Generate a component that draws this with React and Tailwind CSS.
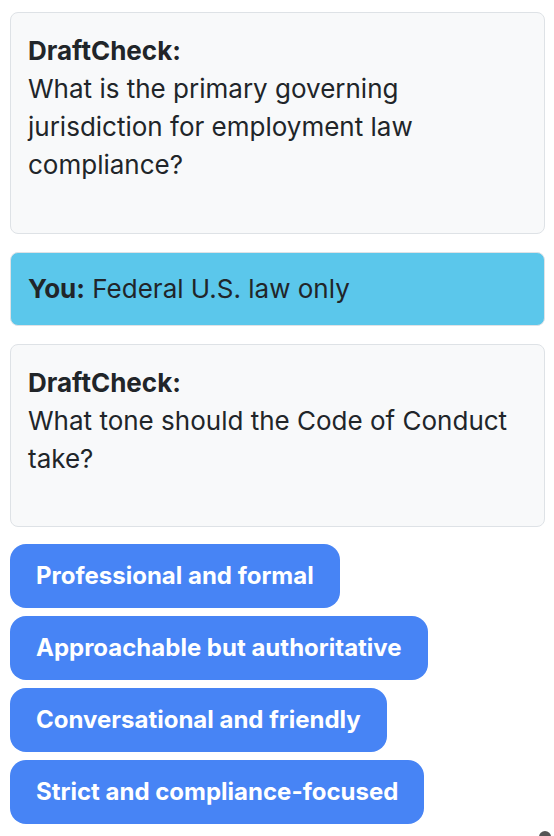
export default function App() {
  const options = [
    "Professional and formal",
    "Approachable but authoritative",
    "Conversational and friendly",
    "Strict and compliance-focused",
  ];

  return (
    <div
      className="relative w-[554px] h-[836px] overflow-hidden bg-white text-[#212529]"
      style={{ fontFamily: "Inter, 'Noto Sans', sans-serif" }}
    >
      <div className="flex flex-col gap-[18px] pt-3 pl-[10px] pr-[9px]">
        {/* bot message */}
        <div className="border border-[#dee2e6] bg-[#f8f9fa] rounded-lg px-[17px] pt-[19px] pb-[49px] text-[26px] leading-[38px]">
          <div className="font-bold">DraftCheck:</div>
          <div>What is the primary governing jurisdiction for employment law compliance?</div>
        </div>

        {/* user reply */}
        <div className="border border-[#dee2e6] bg-[#5bc7eb] rounded-lg px-[17px] py-[17px] text-[26px] leading-[38px]">
          <span className="font-bold">You:</span> Federal U.S. law only
        </div>

        {/* bot message */}
        <div className="border border-[#dee2e6] bg-[#f8f9fa] rounded-lg px-[17px] pt-[19px] pb-[48px] text-[26px] leading-[38px]">
          <div className="font-bold">DraftCheck:</div>
          <div>What tone should the Code of Conduct take?</div>
        </div>
      </div>

      {/* quick replies */}
      <div className="flex flex-col items-start gap-2 pl-[10px] mt-[17px]">
        {options.map((o) => (
          <button
            key={o}
            className="h-[64px] px-[26px] rounded-2xl bg-[#4784f5] text-white font-bold text-[24px]"
          >
            {o}
          </button>
        ))}
      </div>

      <div className="absolute right-[3px] top-[831px] w-3 h-3 rounded-full bg-[#555]" />
    </div>
  );
}
